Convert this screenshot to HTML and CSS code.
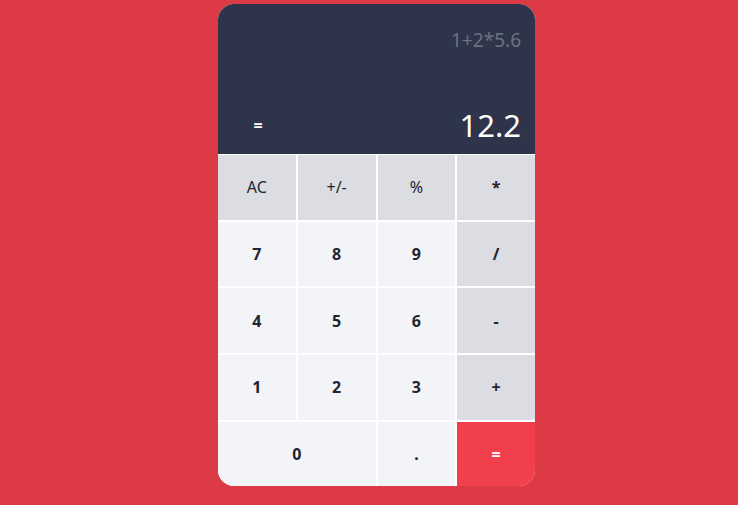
FILE: index.html
```html
<!DOCTYPE html>
<html>
<head>
<meta charset="utf-8">
<link rel="stylesheet" href="styles.css">
</head>
<body>
<div class="calc">
  <div class="display">
    <div class="expr">1+2*5.6</div>
    <div class="result-row">
      <span class="eq">=</span>
      <span class="result">12.2</span>
    </div>
  </div>
  <div class="keys">
    <div class="key fn">AC</div>
    <div class="key fn">+/-</div>
    <div class="key fn">%</div>
    <div class="key op">*</div>
    <div class="key num">7</div>
    <div class="key num">8</div>
    <div class="key num">9</div>
    <div class="key op">/</div>
    <div class="key num">4</div>
    <div class="key num">5</div>
    <div class="key num">6</div>
    <div class="key op">-</div>
    <div class="key num">1</div>
    <div class="key num">2</div>
    <div class="key num">3</div>
    <div class="key op">+</div>
    <div class="key num zero">0</div>
    <div class="key num">.</div>
    <div class="key equals">=</div>
  </div>
</div>
</body>
</html>
```

FILE: styles.css
```css
html, body {
  margin: 0;
  padding: 0;
}
body {
  background: #dc3a45;
  font-family: "Noto Sans", "Open Sans", sans-serif;
  height: 505px;
  overflow: hidden;
}
.calc {
  width: 317px;
  margin: 4px 0 0 218px;
  border-radius: 16px;
  overflow: hidden;
  background: #ffffff;
}
.display {
  background: #2e3449;
  height: 150px;
  box-sizing: border-box;
  padding: 21px 14px 0 0;
  display: flex;
  flex-direction: column;
  justify-content: space-between;
}
.expr {
  text-align: right;
  color: #6c7282;
  font-size: 19px;
  line-height: 30px;
}
.result-row {
  display: flex;
  align-items: center;
  justify-content: space-between;
  height: 50px;
  padding-bottom: 4px;
}
.eq {
  width: 80px;
  text-align: center;
  color: #ffffff;
  font-weight: 700;
  font-size: 16px;
}
.result {
  color: #ffffff;
  font-size: 31px;
}
.keys {
  display: grid;
  grid-template-columns: repeat(4, 1fr);
  grid-auto-rows: 64.7px;
  gap: 2px;
  padding-top: 1px;
}
.key {
  display: flex;
  align-items: center;
  justify-content: center;
  font-size: 16px;
  color: #1f2430;
}
.fn {
  background: #dbdde3;
  font-weight: 400;
}
.op {
  background: #dbdde3;
  font-weight: 700;
}
.num {
  background: #f3f4f7;
  font-weight: 700;
}
.zero {
  grid-column: span 2;
}
.equals {
  background: #f23f4c;
  color: #ffffff;
  font-weight: 700;
}
```
